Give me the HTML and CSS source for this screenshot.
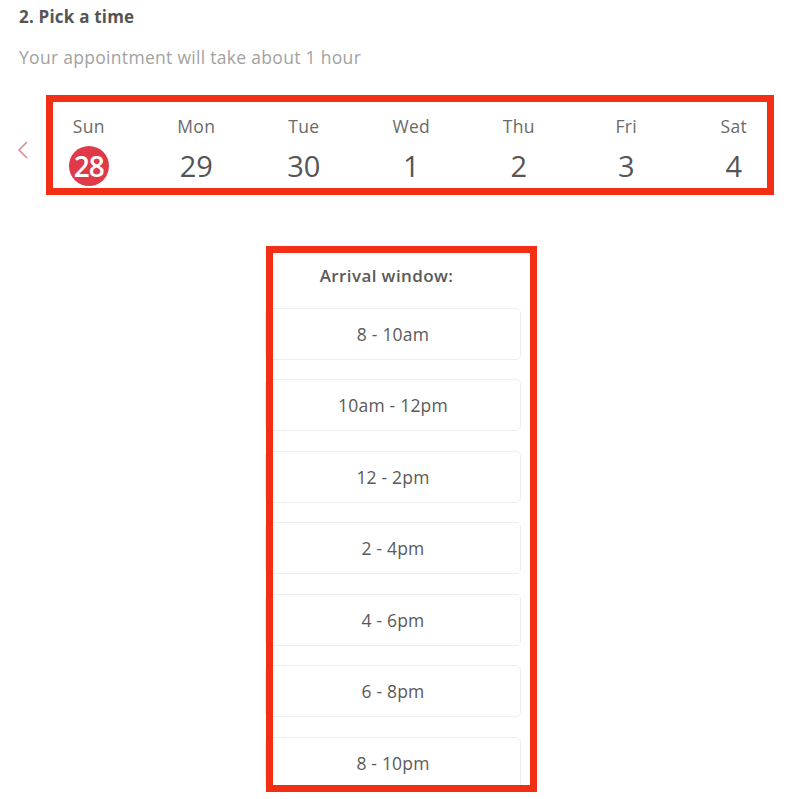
FILE: index.html
```html
<!DOCTYPE html>
<html>
<head>
<meta charset="utf-8">
<link rel="stylesheet" href="styles.css">
</head>
<body>
<div class="page">
  <h2 class="title">2. Pick a time</h2>
  <p class="sub">Your appointment will take about 1 hour</p>

  <div class="week-wrap">
    <button class="prev" aria-label="Previous week">
      <svg width="12" height="20" viewBox="0 0 12 20"><path d="M10 2 L2 10 L10 18" fill="none" stroke="#d98a92" stroke-width="1.6"/></svg>
    </button>
    <div class="week">
      <div class="day"><span class="dname">Sun</span><span class="dnum selected">28</span></div>
      <div class="day"><span class="dname">Mon</span><span class="dnum">29</span></div>
      <div class="day"><span class="dname">Tue</span><span class="dnum">30</span></div>
      <div class="day"><span class="dname">Wed</span><span class="dnum">1</span></div>
      <div class="day"><span class="dname">Thu</span><span class="dnum">2</span></div>
      <div class="day"><span class="dname">Fri</span><span class="dnum">3</span></div>
      <div class="day"><span class="dname">Sat</span><span class="dnum">4</span></div>
    </div>
    <div class="frame frame-week"></div>
  </div>

  <div class="slots-wrap">
    <div class="slots">
      <div class="slots-head">Arrival window:</div>
      <div class="slot">8 - 10am</div>
      <div class="slot">10am - 12pm</div>
      <div class="slot">12 - 2pm</div>
      <div class="slot">2 - 4pm</div>
      <div class="slot">4 - 6pm</div>
      <div class="slot">6 - 8pm</div>
      <div class="slot">8 - 10pm</div>
    </div>
    <div class="frame frame-slots"></div>
  </div>
</div>
</body>
</html>
```

FILE: styles.css
```css
html, body {
  margin: 0;
  padding: 0;
  background: #ffffff;
  overflow: hidden;
}
body {
  font-family: "Open Sans", "Noto Sans", Arial, sans-serif;
  color: #555555;
  width: 800px;
  height: 799px;
}
.page {
  padding: 0 0 0 19px;
}
.title {
  margin: 0;
  padding-top: 6px;
  font-size: 17px;
  line-height: 22px;
  font-weight: 700;
  letter-spacing: 0.2px;
  color: #555555;
}
.sub {
  margin: 17px 0 0 0;
  font-size: 17.5px;
  line-height: 24px;
  letter-spacing: 0.3px;
  color: #a2a2a2;
}
.week-wrap {
  position: relative;
  margin-top: 26px;
  margin-left: -19px;
  height: 100px;
}
.prev {
  position: absolute;
  left: 17px;
  top: 45px;
  border: 0;
  background: none;
  padding: 0;
  width: 12px;
  height: 20px;
}
.week {
  display: grid;
  grid-template-columns: repeat(7, 107.5px);
  margin-left: 35px;
  padding-top: 19px;
}
.day {
  display: flex;
  flex-direction: column;
  align-items: center;
}
.dname {
  font-size: 17.5px;
  line-height: 24px;
  letter-spacing: 0.3px;
  color: #6a6a6a;
}
.dnum {
  margin-top: 10px;
  font-size: 29px;
  line-height: 36px;
  font-weight: 500;
  color: #555555;
}
.dnum.selected {
  width: 40px;
  height: 40px;
  margin-top: 8px;
  border-radius: 50%;
  background: #e03a48;
  color: #ffffff;
  font-size: 28px;
  font-weight: 600;
  line-height: 40px;
  text-align: center;
  letter-spacing: -1px;
}
.frame {
  position: absolute;
  border: 7px solid #f22e15;
  box-sizing: border-box;
  pointer-events: none;
}
.frame-week {
  left: 46px;
  top: 0;
  width: 728px;
  height: 100px;
}
.slots-wrap {
  position: relative;
  margin-top: 51px;
  margin-left: 247px;
  width: 271px;
  height: 546px;
}
.frame-slots {
  left: 0;
  top: 0;
  width: 271px;
  height: 546px;
}
.slots {
  margin-left: -1px;
  width: 256px;
  padding-top: 18px;
  display: flex;
  flex-direction: column;
  gap: 19.5px;
  height: 546px;
  overflow: hidden;
  box-sizing: border-box;
}
.slots-head {
  font-size: 17px;
  line-height: 24px;
  font-weight: 600;
  letter-spacing: 0.4px;
  color: #5a5a5a;
  text-align: center;
  padding-right: 13px;
  margin-bottom: 0;
}
.slot {
  flex: 0 0 auto;
  height: 52px;
  box-sizing: border-box;
  border: 1px solid #eeeeee;
  border-radius: 5px;
  display: flex;
  align-items: center;
  justify-content: center;
  font-size: 17.5px;
  letter-spacing: 0.2px;
  color: #5a5a5a;
}
```
